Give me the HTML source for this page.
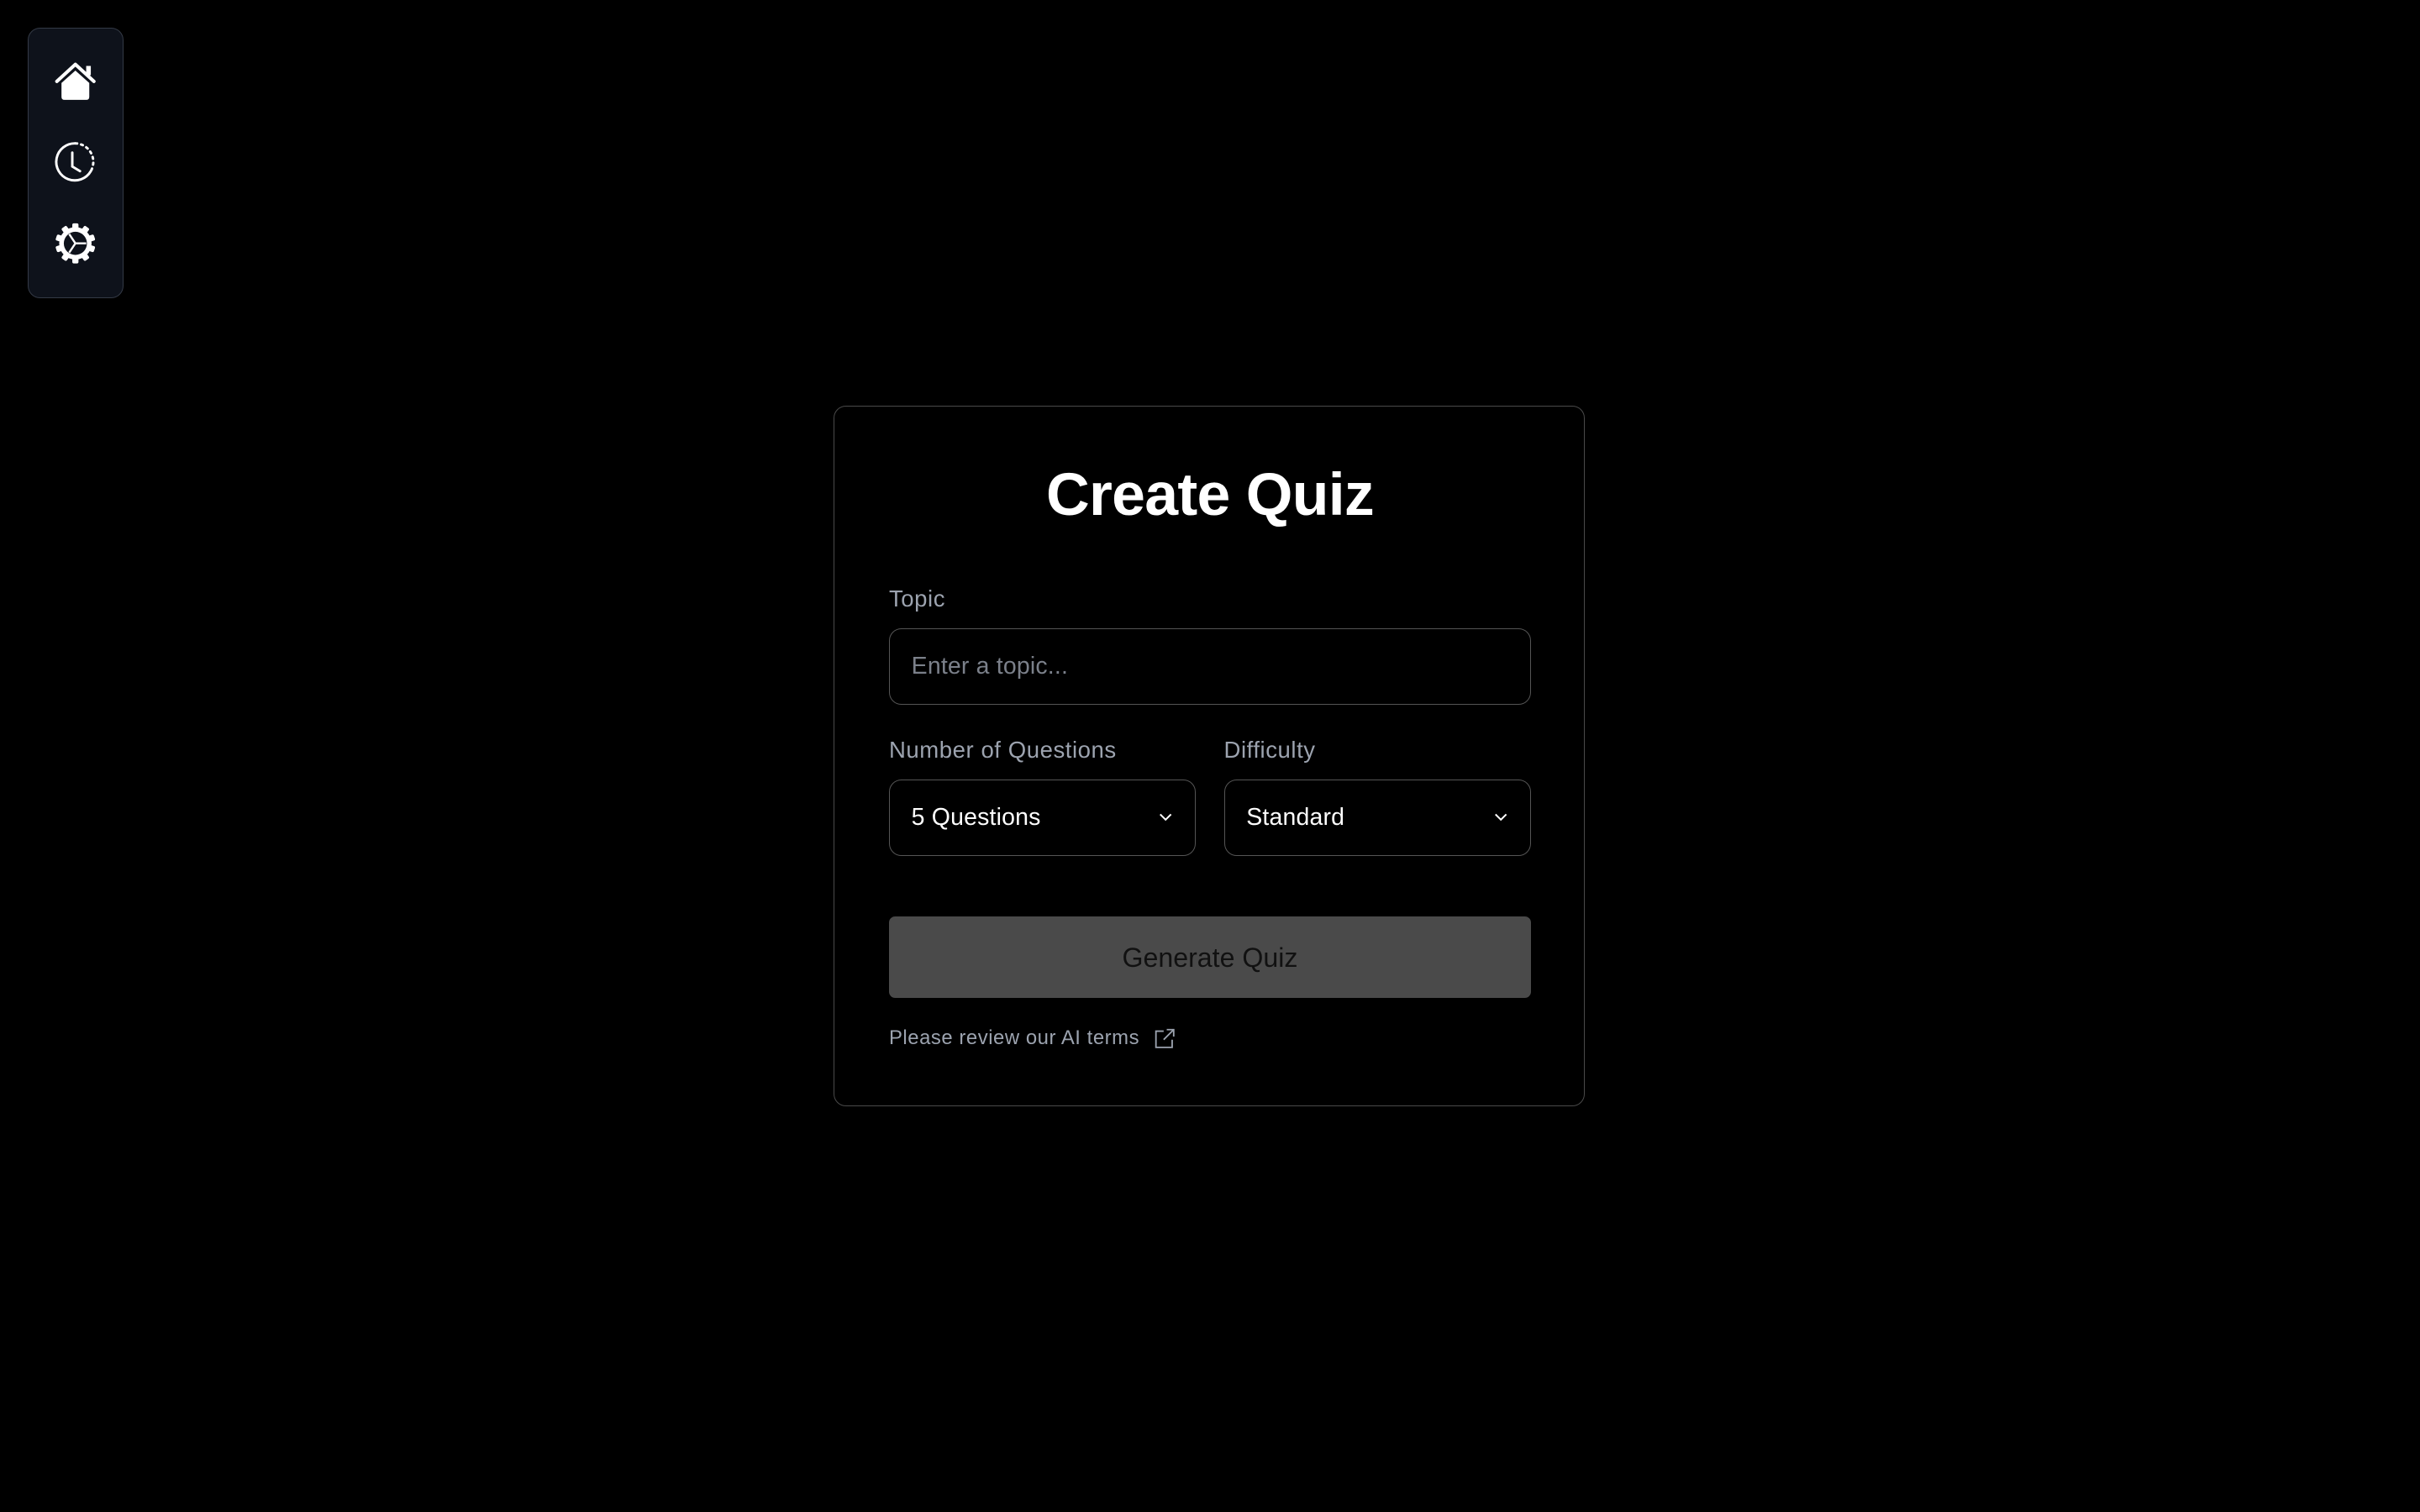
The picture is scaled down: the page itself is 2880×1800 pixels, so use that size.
<!DOCTYPE html>
<html><head><meta charset="utf-8"><style>
html,body{margin:0;padding:0;background:#000;}
body{width:2880px;height:1800px;overflow:hidden;}
#w{position:absolute;left:0;top:0;width:1568px;height:980px;zoom:1.83673;font-family:"Liberation Sans",sans-serif;}
.a{position:absolute;}
.side{left:18px;top:18px;width:61px;height:174px;background:#0e121b;border:1px solid #343a46;border-radius:8px;}
.card{left:540px;top:263px;width:486px;height:453px;border:1px solid #4a4a4a;border-radius:8px;}
h1{position:absolute;margin:0;left:540px;width:488px;top:296px;text-align:center;color:#fff;font-size:39px;font-weight:bold;line-height:50px;letter-spacing:-0.4px}
.lbl{color:#9ca3af;font-size:15px;line-height:18px;letter-spacing:0.3px}
.box{border:1px solid #555;border-radius:8px;box-sizing:border-box;height:50px;font-size:15.5px;line-height:48px;padding-left:14px;color:#fff;letter-spacing:0.1px}
.chev{position:absolute;right:14px;top:19px;}
</style></head><body><div id="w">
<div class="a side"></div>
<svg class="a" style="left:35px;top:40px" width="28" height="26" viewBox="0 0 28 26">
<path d="M2 13 L14 2 L26 13" fill="none" stroke="#fff" stroke-width="2.2" stroke-linecap="round" stroke-linejoin="round"/>
<rect x="21" y="3" width="3" height="6" fill="#fff"/>
<path d="M5 14 L14 6 L23 14 V23 Q23 25 21 25 H7 Q5 25 5 23 Z" fill="#fff"/>
</svg>
<svg class="a" style="left:35px;top:91px" width="28" height="28" viewBox="0 0 28 28">
<path d="M14 2 A12 12 0 1 0 24 20" fill="none" stroke="#fff" stroke-width="1.6" stroke-linecap="round"/>
<path d="M14 2 A12 12 0 0 1 24 20" fill="none" stroke="#fff" stroke-width="1.6" stroke-dasharray="1.2 2.6" stroke-linecap="round"/>
<path d="M12 8 V17 L17 20" fill="none" stroke="#fff" stroke-width="1.6" stroke-linecap="round"/>
</svg>
<svg class="a" style="left:35px;top:144px" width="28" height="28" viewBox="0 0 28 28">
<g fill="#fff">
<circle cx="14" cy="14" r="10.5"/>
<g id="t"><rect x="12" y="1" width="4" height="5" rx="1"/></g>
<use href="#t" transform="rotate(36 14 14)"/><use href="#t" transform="rotate(72 14 14)"/><use href="#t" transform="rotate(108 14 14)"/><use href="#t" transform="rotate(144 14 14)"/><use href="#t" transform="rotate(180 14 14)"/><use href="#t" transform="rotate(216 14 14)"/><use href="#t" transform="rotate(252 14 14)"/><use href="#t" transform="rotate(288 14 14)"/><use href="#t" transform="rotate(324 14 14)"/>
</g>
<circle cx="14" cy="14" r="7.5" fill="#0e121b"/>
<path d="M14 14 H21 M14 14 L10 8 M14 14 L10 20" stroke="#fff" stroke-width="1.3"/>
</svg>

<div class="a card"></div>
<h1>Create Quiz</h1>
<div class="a lbl" style="left:576px;top:379px">Topic</div>
<div class="a box" style="left:576px;top:407px;width:416px;color:#7b808a">Enter a topic...</div>
<div class="a lbl" style="left:576px;top:477px">Number of Questions</div>
<div class="a lbl" style="left:793px;top:477px">Difficulty</div>
<div class="a box" style="left:576px;top:505px;width:199px">5 Questions<svg class="chev" width="10" height="10" viewBox="0 0 10 10"><path d="M1.5 3.5 L5 7 L8.5 3.5" fill="none" stroke="#fff" stroke-width="1.1"/></svg></div>
<div class="a box" style="left:793px;top:505px;width:199px">Standard<svg class="chev" width="10" height="10" viewBox="0 0 10 10"><path d="M1.5 3.5 L5 7 L8.5 3.5" fill="none" stroke="#fff" stroke-width="1.1"/></svg></div>
<div class="a" style="left:576px;top:594px;width:416px;height:53px;background:#4a4a4a;border-radius:4px;color:#111;font-size:17.5px;line-height:54px;text-align:center">Generate Quiz</div>
<div class="a" style="left:576px;top:665px;color:#9ca3af;font-size:13px;line-height:16px;letter-spacing:0.3px">Please review our AI terms</div>
<svg class="a" style="left:747px;top:666px" width="15" height="15" viewBox="0 0 15 15"><path d="M7 2.5 H2 V13 H12.5 V8 M9 1.5 H13.5 V6 M13.5 1.5 L7 8" fill="none" stroke="#9ca3af" stroke-width="1"/></svg>
</div></body></html>
